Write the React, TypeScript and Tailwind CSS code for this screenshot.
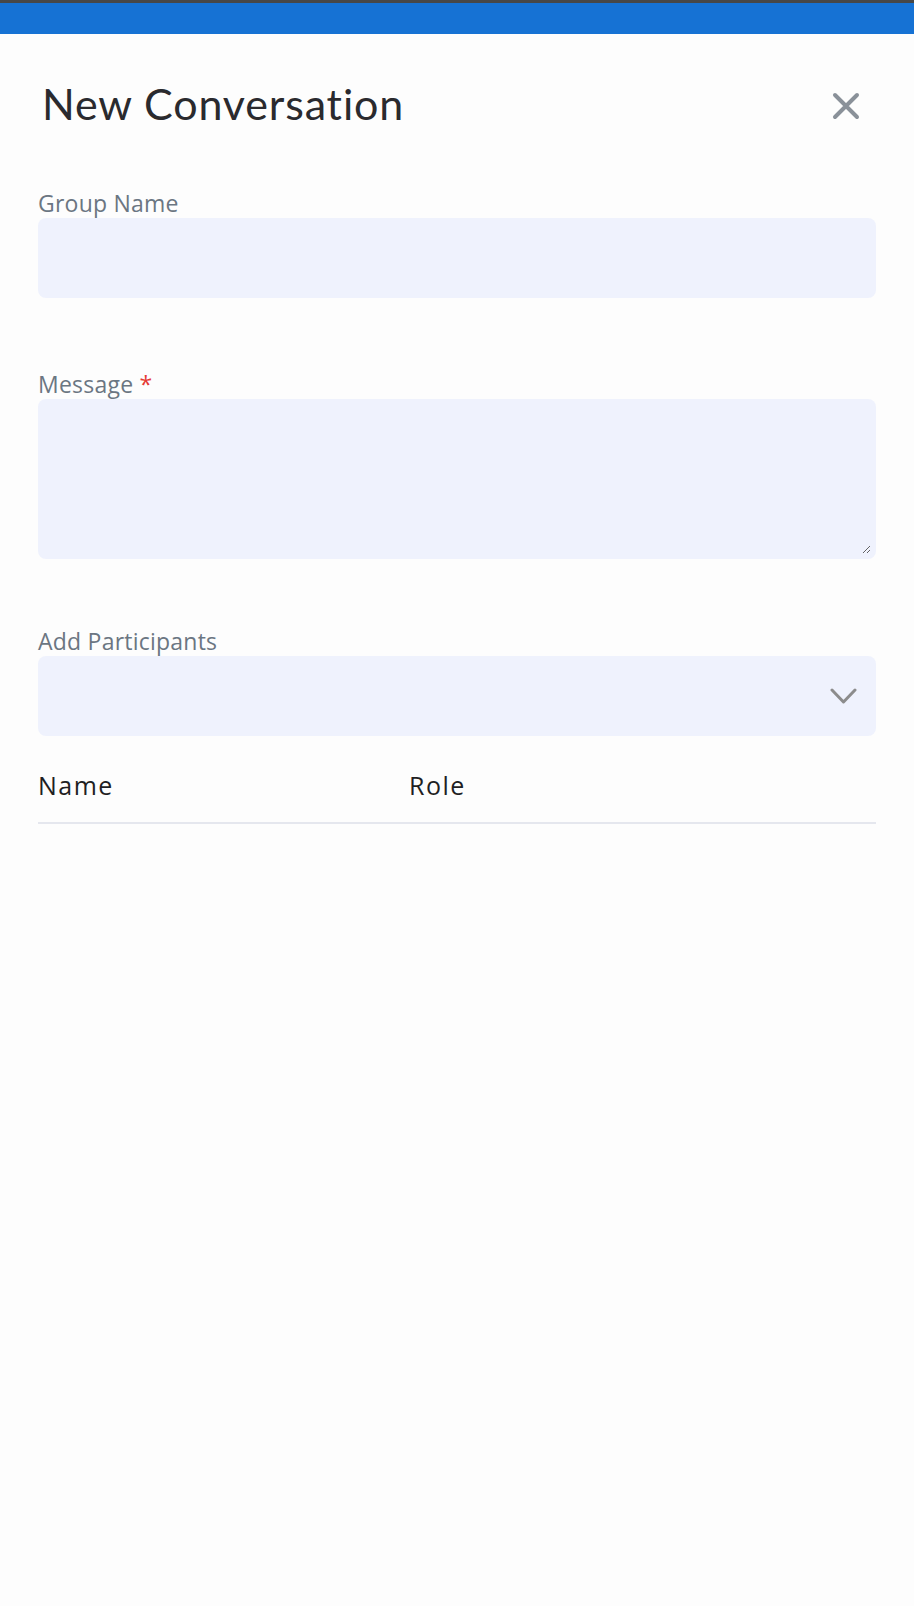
import { useState } from 'react';

export default function App() {
  const [groupName, setGroupName] = useState('');
  const [message, setMessage] = useState('');

  return (
    <div className="min-h-[1606px] w-full bg-[#fdfdfd] font-['Open_Sans',sans-serif]">
      {/* top bar */}
      <div className="h-[34px] border-t-[3px] border-[#474747] bg-[#1672d4]" />

      <div className="px-[38px]">
        {/* header */}
        <div className="mt-[44px] flex items-center justify-between">
          <h1 className="pl-[4px] font-['Lato',sans-serif] text-[43px] leading-[52px] font-normal tracking-[0.02em] text-[#2a2a2e]">
            New Conversation
          </h1>
          <button className="mr-[12px] mt-[4px] flex h-[36px] w-[36px] items-center justify-center text-[#8a9199]">
            <svg width="30" height="30" viewBox="0 0 30 30" fill="none" stroke="currentColor" strokeWidth="4" strokeLinecap="round">
              <path d="M4 4L26 26M26 4L4 26" />
            </svg>
          </button>
        </div>

        {/* group name */}
        <label className="mt-[59px] block text-[23px] leading-[28px] tracking-[0.01em] text-[#6b7682]">Group Name</label>
        <input
          value={groupName}
          onChange={(e) => setGroupName(e.target.value)}
          className="mt-[1px] block h-[80px] w-full rounded-[8px] bg-[#eff2fd] px-4 text-[20px] outline-none"
        />

        {/* message */}
        <label className="mt-[72px] block text-[23px] leading-[28px] tracking-[0.01em] text-[#6b7682]">
          Message <span className="text-[#e53935]">*</span>
        </label>
        <textarea
          value={message}
          onChange={(e) => setMessage(e.target.value)}
          className="mt-[1px] block h-[160px] w-full resize-y rounded-[8px] border-[5px] border-transparent bg-[#eff2fd] p-3 text-[20px] outline-none"
        />

        {/* participants */}
        <label className="mt-[68px] block text-[23px] leading-[28px] tracking-[0.01em] text-[#6b7682]">Add Participants</label>
        <div className="mt-[1px] flex h-[80px] w-full items-center justify-end rounded-[8px] bg-[#eff2fd] pr-[19px]">
          <svg width="27" height="16" viewBox="0 0 27 16" fill="none" stroke="#8c8c8c" strokeWidth="3" strokeLinecap="round" strokeLinejoin="round">
            <path d="M2 2L13.5 14L25 2" />
          </svg>
        </div>

        {/* table header */}
        <div className="mt-[34px] flex border-b-2 border-[#e5e7ee] pb-[22px] text-[25px] leading-[30px] font-medium tracking-[0.06em] text-[#1f1f23]">
          <div className="w-[371px]">Name</div>
          <div>Role</div>
        </div>
      </div>
    </div>
  );
}
